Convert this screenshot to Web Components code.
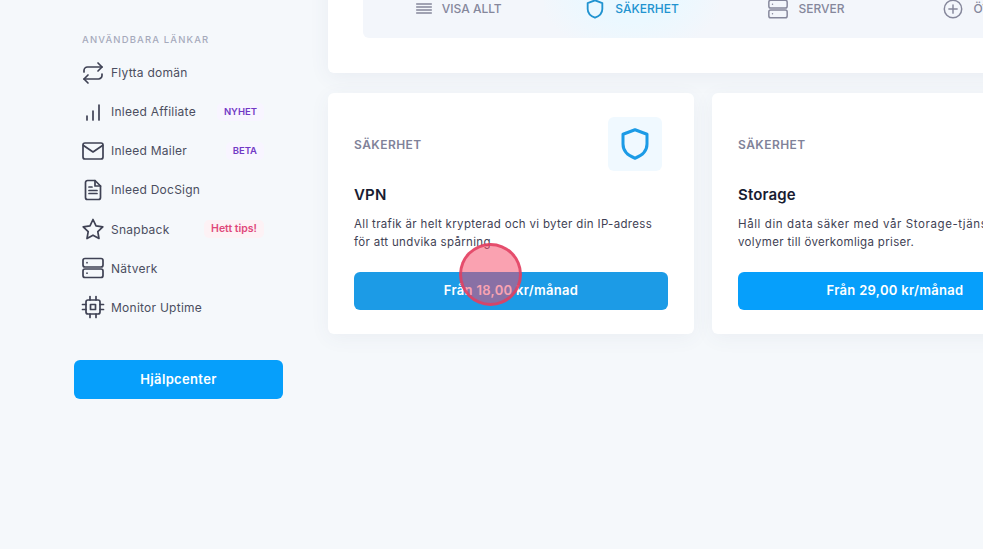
<!DOCTYPE html>
<html lang="sv">
<head>
<meta charset="utf-8">
<title>Inleed</title>
<style>
    html, body {
        margin: 0;
        height: 100%;
        overflow: hidden;
        background-color: #f5f8fb;
        font-family: Inter, "Liberation Sans", sans-serif;
    }

    .wide {
        letter-spacing: 0.600px;
    }
</style>
</head>
<body>
<app-page>
    <side-nav slot="side">
        <nav-link icon="repeat" label="Flytta domän"></nav-link>
        <nav-link icon="signal" label="Inleed Affiliate" badge="NYHET"></nav-link>
        <nav-link icon="mail" label="Inleed Mailer" badge="BETA"></nav-link>
        <nav-link icon="doc" label="Inleed DocSign"></nav-link>
        <nav-link icon="star" label="Snapback" badge="Hett tips!" hot></nav-link>
        <nav-link icon="server" label="Nätverk"></nav-link>
        <nav-link icon="cpu" label="Monitor Uptime"></nav-link>
    </side-nav>
    <tab-bar slot="top">
        <tab-item icon="menu" label="VISA ALLT"></tab-item>
        <tab-item icon="shield" label="SÄKERHET" active></tab-item>
        <tab-item icon="server" label="SERVER"></tab-item>
        <tab-item icon="plus" label="ÖVRIGT"></tab-item>
    </tab-bar>
    <offer-card slot="cards" category="SÄKERHET" name="VPN" price="Från 18,00 kr/månad" tinted>All trafik är helt krypterad och vi byter din IP-adress<br>för att undvika spårning</offer-card>
    <offer-card slot="cards" category="SÄKERHET" name="Storage" price="Från 29,00 kr/månad"><span class="wide">Håll din data säker med vår Storage-tjänst med stora</span><br>volymer till överkomliga priser.</offer-card>
    <click-marker></click-marker>
</app-page>

<script>
const ICONS = {
    repeat: '<path d="M17 2l4 4-4 4"/><path d="M3 11V9.500a3.500 3.500 0 0 1 3.500-3.500H21"/><path d="M7 22l-4-4 4-4"/><path d="M21 13v1.500a3.500 3.500 0 0 1-3.500 3.500H3"/>',
    signal: '<path d="M6 20v-4"/><path d="M12 20v-9"/><path d="M18 20V5"/>',
    mail: '<rect x="2" y="4" width="20" height="16" rx="2"/><path d="M2.500 6.500L12 13l9.500-6.500"/>',
    doc: '<path d="M14 2.500H6.500a2 2 0 0 0-2 2v15a2 2 0 0 0 2 2h11a2 2 0 0 0 2-2V8z"/><path d="M14 2.500V8h5.500"/><path d="M8 12.500h8"/><path d="M8 15.500h8"/><path d="M8 9h3"/>',
    star: '<path d="M12 2.500l3 6.300 6.800 1-5 4.800 1.200 6.900-6-3.300-6 3.300 1.200-6.900-5-4.800 6.800-1z"/>',
    server: '<rect x="2" y="2.500" width="20" height="8.500" rx="2"/><rect x="2" y="13" width="20" height="8.500" rx="2"/><path d="M6 6.700h.01"/><path d="M6 17.200h.01"/>',
    cpu: '<rect x="5" y="5" width="14" height="14" rx="2"/><rect x="9.500" y="9.500" width="5" height="5"/><path d="M9 1.500V5"/><path d="M15 1.500V5"/><path d="M9 19v3.500"/><path d="M15 19v3.500"/><path d="M19 9.500h3.500"/><path d="M19 14.500h3.500"/><path d="M1.500 9.500H5"/><path d="M1.500 14.500H5"/>',
    menu: '<path d="M4 6.500h16"/><path d="M4 9.800h16"/><path d="M4 13.100h16"/><path d="M4 16.400h16"/>',
    shield: '<path d="M12 2.500l8 3v6.500c0 4.500-3.500 7.800-8 9.500-4.500-1.700-8-5-8-9.500V5.500z"/>',
    plus: '<circle cx="12" cy="12" r="9.500"/><path d="M12 7.500v9"/><path d="M7.500 12h9"/>',
};

function iconSvg (name, size, width) {
    return `<svg width="${size}" height="${size}" viewBox="0 0 24 24" fill="none" stroke="currentColor"
        stroke-width="${width}" stroke-linecap="round" stroke-linejoin="round">${ICONS[name]}</svg>`;
}

class AppPage extends HTMLElement {
    constructor () {
        super();
        this.attachShadow({ mode: 'open' });
    }

    connectedCallback () {
        this.shadowRoot.innerHTML = `
        <style>
            :host {
                display: grid;
                grid-template-columns: 209px 1fr;
                column-gap: 45px;
                padding-left: 74px;
                position: relative;
                height: 549px;
                overflow: hidden;
            }

            .content {
                margin-top: -40px;
                width: 750px;
            }

            .top-card {
                background-color: #fff;
                height: 113px;
                border-radius: 6px;
                box-shadow: 0 4px 20px rgba(76, 87, 125, 0.07);
                padding-left: 35px;
                margin-bottom: 20px;
            }

            .cards {
                display: grid;
                grid-template-columns: 366px 366px;
                column-gap: 18px;
            }
        </style>
        <slot name="side"></slot>
        <div class="content">
            <div class="top-card"><slot name="top"></slot></div>
            <div class="cards"><slot name="cards"></slot></div>
        </div>
        <slot></slot>
        `;
    }
}

class SideNav extends HTMLElement {
    constructor () {
        super();
        this.attachShadow({ mode: 'open' });
    }

    connectedCallback () {
        this.shadowRoot.innerHTML = `
        <style>
            :host {
                display: block;
                padding-top: 33px;
            }

            h4 {
                margin: 0 0 10.500px 8px;
                height: 13px;
                line-height: 13px;
                font-size: 9.500px;
                font-weight: 500;
                letter-spacing: 1.150px;
                color: #a6aabb;
            }

            .links {
                display: flex;
                flex-direction: column;
                gap: 7.170px;
                padding-left: 7px;
                width: 183px;
            }

            button {
                display: block;
                width: 100%;
                height: 39px;
                margin-top: 36.500px;
                border: none;
                border-radius: 6px;
                background-color: #069ffb;
                color: #fff;
                font: 600 13px Inter, "Liberation Sans", sans-serif;
                letter-spacing: 0.350px;
            }
        </style>
        <h4>ANVÄNDBARA LÄNKAR</h4>
        <div class="links"><slot></slot></div>
        <button>Hjälpcenter</button>
        `;
    }
}

class NavLink extends HTMLElement {
    constructor () {
        super();
        this.attachShadow({ mode: 'open' });
    }

    connectedCallback () {
        const badge = this.getAttribute('badge');
        this.shadowRoot.innerHTML = `
        <style>
            :host {
                display: flex;
                align-items: center;
                height: 32px;
                color: #3f4254;
            }

            svg {
                flex: none;
                margin-right: 6px;
            }

            .label {
                flex: 1;
                font-size: 12px;
                letter-spacing: 0.250px;
                color: #4b4e60;
            }

            .badge {
                font-size: 9.500px;
                font-weight: 600;
                line-height: 18px;
                padding: 0 7px;
                border-radius: 5px;
                color: #7239c5;
                background-color: #f8f5ff;
            }

            :host([hot]) .badge {
                font-size: 10.500px;
                color: #e0487a;
                background-color: #fdf2f5;
            }
        </style>
        ${iconSvg(this.getAttribute('icon'), 24, 1.700)}
        <span class="label">${this.getAttribute('label')}</span>
        ${badge ? `<span class="badge">${badge}</span>` : ''}
        `;
    }
}

class TabBar extends HTMLElement {
    constructor () {
        super();
        this.attachShadow({ mode: 'open' });
    }

    connectedCallback () {
        this.shadowRoot.innerHTML = `
        <style>
            :host {
                display: flex;
                height: 78px;
                padding-left: 7px;
                border-radius: 6px;
                background-color: #f3f6fb;
                overflow: hidden;
            }
        </style>
        <slot></slot>
        `;
    }
}

class TabItem extends HTMLElement {
    constructor () {
        super();
        this.attachShadow({ mode: 'open' });
    }

    connectedCallback () {
        const active = this.hasAttribute('active');
        this.shadowRoot.innerHTML = `
        <style>
            :host {
                display: flex;
                flex: none;
                align-items: center;
                justify-content: center;
                box-sizing: border-box;
                gap: 9px;
                width: 174.400px;
                height: 78px;
                padding-top: 19px;
                color: #85879b;
                font-size: 12px;
                font-weight: 500;
                white-space: nowrap;
            }

            :host([icon="menu"]) {
                gap: 7px;
            }

            :host([active]) {
                color: #2193d0;
                background: radial-gradient(ellipse 95px 68px at 50% 28px, #ebf8ff 50%, #f3f6fb 100%);
            }
        </style>
        ${iconSvg(this.getAttribute('icon'), 22, active ? 2 : 1.600)}
        <span>${this.getAttribute('label')}</span>
        `;
    }
}

class OfferCard extends HTMLElement {
    constructor () {
        super();
        this.attachShadow({ mode: 'open' });
    }

    connectedCallback () {
        this.shadowRoot.innerHTML = `
        <style>
            :host {
                display: block;
                box-sizing: border-box;
                height: 241px;
                padding: 24px 26px;
                border-radius: 6px;
                background-color: #fff;
                box-shadow: 0 4px 20px rgba(76, 87, 125, 0.06);
            }

            .head {
                display: flex;
                align-items: center;
                justify-content: space-between;
                padding-right: 6px;
                margin-bottom: 14px;
            }

            .category {
                font-size: 12px;
                font-weight: 600;
                letter-spacing: 0.450px;
                color: #7f8299;
            }

            .icon {
                display: flex;
                align-items: center;
                justify-content: center;
                width: 54px;
                height: 54px;
                border-radius: 6px;
                background-color: #f0f9ff;
                color: #1c9be6;
            }

            h3 {
                margin: 0 0 10px;
                font-size: 15px;
                line-height: 20px;
                font-weight: 600;
                letter-spacing: 0.150px;
                color: #181c32;
            }

            p {
                margin: 0 0 21px;
                font-size: 11.500px;
                line-height: 18px;
                letter-spacing: 0.330px;
                color: #3f4254;
                white-space: nowrap;
            }

            button {
                display: block;
                width: 314px;
                height: 38px;
                padding: 0 0 2px;
                border: none;
                border-radius: 6px;
                background-color: #069ffb;
                color: #fff;
                font: 600 13px Inter, "Liberation Sans", sans-serif;
                letter-spacing: 0.300px;
            }

            :host([tinted]) button {
                background-color: #1c9be6;
            }
        </style>
        <div class="head">
            <span class="category">${this.getAttribute('category')}</span>
            <span class="icon">${iconSvg('shield', 36, 2)}</span>
        </div>
        <h3>${this.getAttribute('name')}</h3>
        <p><slot></slot></p>
        <button>${this.getAttribute('price')}</button>
        `;
    }
}

class ClickMarker extends HTMLElement {
    constructor () {
        super();
        this.attachShadow({ mode: 'open' });
    }

    connectedCallback () {
        this.shadowRoot.innerHTML = `
        <style>
            :host {
                position: absolute;
                left: 459px;
                top: 243px;
                box-sizing: border-box;
                width: 63px;
                height: 63px;
                border-radius: 50%;
                border: 3px solid rgba(226, 62, 96, 0.85);
                background-color: rgba(245, 70, 100, 0.5);
            }
        </style>
        `;
    }
}

customElements.define('app-page', AppPage);
customElements.define('side-nav', SideNav);
customElements.define('nav-link', NavLink);
customElements.define('tab-bar', TabBar);
customElements.define('tab-item', TabItem);
customElements.define('offer-card', OfferCard);
customElements.define('click-marker', ClickMarker);
</script>
</body>
</html>
